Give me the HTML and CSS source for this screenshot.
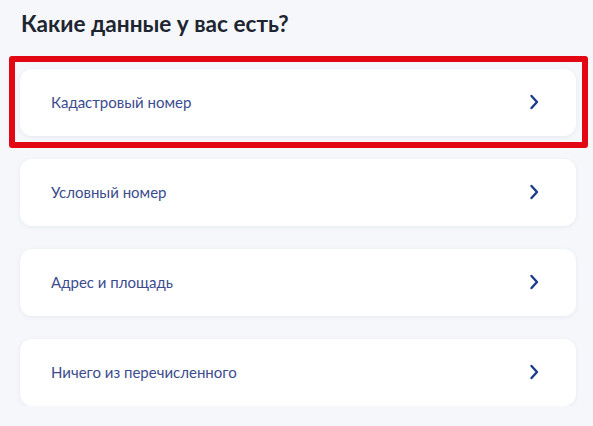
FILE: index.html
```html
<!DOCTYPE html>
<html lang="ru">
<head>
<meta charset="utf-8">
<link rel="stylesheet" href="styles.css">
</head>
<body>
<main class="page">
  <h1 class="title">Какие данные у вас есть?</h1>
  <ul class="options">
    <li class="option option--marked">
      <span class="option__label">Кадастровый номер</span>
      <svg class="option__chevron" viewBox="0 0 10 16" width="10" height="16"><path d="M2.5 2 L8 8 L2.5 14" fill="none" stroke="currentColor" stroke-width="2.4" stroke-linecap="round" stroke-linejoin="round"/></svg>
    </li>
    <li class="option">
      <span class="option__label">Условный номер</span>
      <svg class="option__chevron" viewBox="0 0 10 16" width="10" height="16"><path d="M2.5 2 L8 8 L2.5 14" fill="none" stroke="currentColor" stroke-width="2.4" stroke-linecap="round" stroke-linejoin="round"/></svg>
    </li>
    <li class="option">
      <span class="option__label">Адрес и площадь</span>
      <svg class="option__chevron" viewBox="0 0 10 16" width="10" height="16"><path d="M2.5 2 L8 8 L2.5 14" fill="none" stroke="currentColor" stroke-width="2.4" stroke-linecap="round" stroke-linejoin="round"/></svg>
    </li>
    <li class="option">
      <span class="option__label">Ничего из перечисленного</span>
      <svg class="option__chevron" viewBox="0 0 10 16" width="10" height="16"><path d="M2.5 2 L8 8 L2.5 14" fill="none" stroke="currentColor" stroke-width="2.4" stroke-linecap="round" stroke-linejoin="round"/></svg>
    </li>
  </ul>
</main>
</body>
</html>
```

FILE: styles.css
```css
html, body {
  margin: 0;
  padding: 0;
  background: #f5f7fa;
}

body {
  font-family: Lato, "Noto Sans", sans-serif;
  color: #1f2733;
}

.page {
  padding: 9px 17px 0 20px;
}

.title {
  margin: 0 0 0 1px;
  font-size: 22.6px;
  line-height: 30px;
  font-weight: 700;
  color: #1d2530;
}

.options {
  list-style: none;
  margin: 30px 0 0 0;
  padding: 0;
  display: flex;
  flex-direction: column;
  gap: 23px;
}

.option {
  position: relative;
  height: 67px;
  box-sizing: border-box;
  display: flex;
  align-items: center;
  justify-content: space-between;
  padding: 0 37px 0 31px;
  background: #ffffff;
  border-radius: 12px;
  box-shadow: 0 1px 4px rgba(40, 60, 110, 0.08);
}

.option--marked::after {
  content: "";
  position: absolute;
  top: -13px;
  left: -11px;
  right: -12px;
  bottom: -12px;
  border: 6px solid #e30613;
  border-radius: 3px;
  pointer-events: none;
}

.option__label {
  font-size: 15px;
  color: #3b4c8e;
  margin-top: -2px;
}

.option__chevron {
  color: #1b3c8c;
  margin-top: -1px;
}
```
